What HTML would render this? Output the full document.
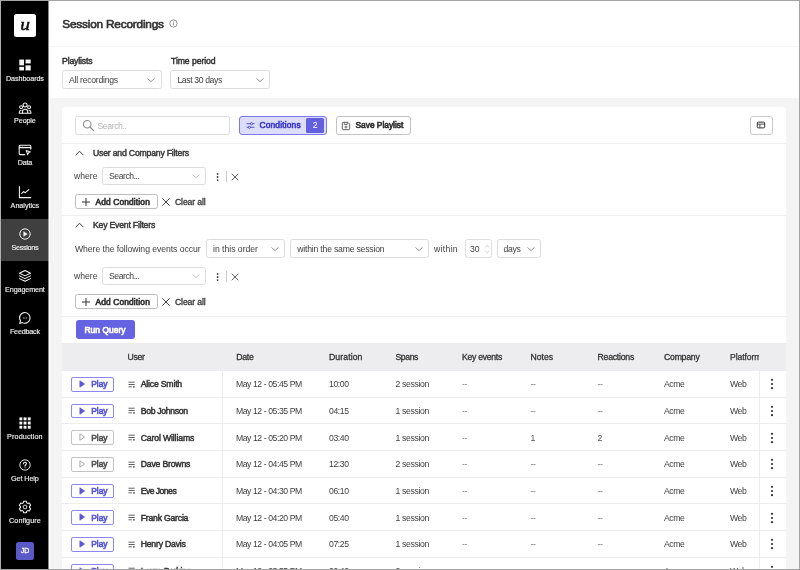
<!DOCTYPE html>
<html lang="en"><head><meta charset="utf-8"><title>Session Recordings</title>
<style>
html,body{margin:0;padding:0}
body{width:800px;height:570px;position:relative;overflow:hidden;background:#f4f4f5;font-family:"Liberation Sans", sans-serif}
body>div,body>svg{position:absolute;box-sizing:border-box}
body{will-change:transform}
.t{white-space:nowrap}
</style></head>
<body>
<div style="left:48px;top:1px;width:751px;height:97px;background:#fff"></div>
<div style="left:48px;top:45.5px;width:751px;height:1px;background:#f2f2f2"></div>
<div style="left:1px;top:1px;width:47px;height:568px;background:#000"></div>
<div style="left:48px;top:1px;width:1px;height:568px;background:#8a8a8a"></div>
<div style="left:1px;top:218.7px;width:47px;height:42px;background:#3f3f3f"></div>
<div style="left:48px;top:218.7px;width:1px;height:42px;background:#a0a0a0"></div>
<div style="left:14px;top:14px;width:22px;height:23px;background:#fff;border-radius:2.5px"></div>
<div class="t" style="top:17.50px;font-size:16.5px;font-weight:400;color:#111;line-height:14px;font-family:'Liberation Serif',serif;font-style:italic;transform:scaleX(1.18);-webkit-text-stroke:0.48px;left:-75.0px;width:200px;text-align:center;"><span>u</span></div>
<div class="t" style="top:72.15px;font-size:7.2px;font-weight:400;color:#f0f0f0;line-height:14px;-webkit-text-stroke:0.15px;left:-75.1px;width:200px;text-align:center;"><span style="letter-spacing:-0.08px">Dashboards</span></div>
<div class="t" style="top:114.32px;font-size:7.2px;font-weight:400;color:#f0f0f0;line-height:14px;-webkit-text-stroke:0.15px;left:-75.1px;width:200px;text-align:center;"><span style="letter-spacing:-0.13px">People</span></div>
<div class="t" style="top:156.49px;font-size:7.2px;font-weight:400;color:#f0f0f0;line-height:14px;-webkit-text-stroke:0.15px;left:-75.1px;width:200px;text-align:center;"><span style="letter-spacing:-0.20px">Data</span></div>
<div class="t" style="top:198.66px;font-size:7.2px;font-weight:400;color:#f0f0f0;line-height:14px;-webkit-text-stroke:0.15px;left:-75.1px;width:200px;text-align:center;"><span style="letter-spacing:-0.02px">Analytics</span></div>
<div class="t" style="top:240.83px;font-size:7.2px;font-weight:400;color:#f0f0f0;line-height:14px;-webkit-text-stroke:0.15px;left:-75.1px;width:200px;text-align:center;"><span style="letter-spacing:-0.30px">Sessions</span></div>
<div class="t" style="top:283.00px;font-size:7.2px;font-weight:400;color:#f0f0f0;line-height:14px;-webkit-text-stroke:0.15px;left:-75.1px;width:200px;text-align:center;"><span style="letter-spacing:-0.11px">Engagement</span></div>
<div class="t" style="top:325.17px;font-size:7.2px;font-weight:400;color:#f0f0f0;line-height:14px;-webkit-text-stroke:0.15px;left:-75.1px;width:200px;text-align:center;"><span style="letter-spacing:-0.20px">Feedback</span></div>
<div class="t" style="top:429.65px;font-size:7.2px;font-weight:400;color:#f0f0f0;line-height:14px;-webkit-text-stroke:0.15px;left:-75.1px;width:200px;text-align:center;"><span style="letter-spacing:0.13px">Production</span></div>
<div class="t" style="top:471.55px;font-size:7.2px;font-weight:400;color:#f0f0f0;line-height:14px;-webkit-text-stroke:0.15px;left:-75.1px;width:200px;text-align:center;"><span style="letter-spacing:-0.10px">Get Help</span></div>
<div class="t" style="top:513.55px;font-size:7.2px;font-weight:400;color:#f0f0f0;line-height:14px;-webkit-text-stroke:0.15px;left:-75.1px;width:200px;text-align:center;"><span style="letter-spacing:0.05px">Configure</span></div>
<svg style="left:17.9px;top:58.349999999999994px;" width="14" height="14" viewBox="0 0 14 14"><g fill="#f4f4f4"><rect x="1.3" y="1.55" width="4.7" height="5.8"/><rect x="7.5" y="1.55" width="5.2" height="3.9"/><rect x="1.3" y="8.85" width="4.7" height="3.6"/><rect x="7.5" y="7.35" width="5.2" height="5.1"/></g></svg>
<svg style="left:17.9px;top:100.52px;" width="14" height="14" viewBox="0 0 14 14"><g fill="none" stroke="#f4f4f4" stroke-width="1.05" stroke-linecap="round" stroke-linejoin="round"><circle cx="7.1" cy="4" r="2"/><circle cx="3.1" cy="6.2" r="1.45"/><circle cx="11.1" cy="6.2" r="1.45"/><path d="M4.5 12.3V10.6C4.5 9.2 5.6 8.3 7.1 8.3S9.7 9.2 9.7 10.6V12.3Z"/><path d="M4.5 12.3H1.3V11.2C1.3 10.1 2 9.5 3.1 9.5"/><path d="M9.7 12.3H12.9V11.2C12.9 10.1 12.2 9.5 11.1 9.5"/></g></svg>
<svg style="left:17.9px;top:142.69px;" width="14" height="14" viewBox="0 0 14 14"><g fill="none" stroke="#f4f4f4" stroke-width="1.05" stroke-linecap="round" stroke-linejoin="round"><path d="M6.8 11.6H2.2C1.6 11.6 1.2 11.2 1.2 10.6V3.2C1.2 2.6 1.6 2.2 2.2 2.2H11.8C12.4 2.2 12.8 2.6 12.8 3.2V6.2"/><path d="M1.2 4.6H12.8"/><path d="M8.2 7.4L12.4 8.9L10.5 9.8L9.7 11.7Z"/></g><circle cx="2.8" cy="3.4" r="0.4" fill="#f4f4f4"/><circle cx="4.2" cy="3.4" r="0.4" fill="#f4f4f4"/></svg>
<svg style="left:17.9px;top:184.86px;" width="14" height="14" viewBox="0 0 14 14"><g fill="none" stroke="#f4f4f4" stroke-width="1.05" stroke-linecap="round" stroke-linejoin="round"><path d="M1.4 1.4V12.6H12.8"/><path d="M3.8 8.4L5.6 6.6L7.3 7.7L10.8 4.6"/></g></svg>
<svg style="left:17.9px;top:227.03px;" width="14" height="14" viewBox="0 0 14 14"><circle cx="7" cy="7" r="5.2" fill="none" stroke="#f4f4f4" stroke-width="1"/><path d="M5.7 4.7L9.3 7L5.7 9.3Z" fill="#f4f4f4" stroke="#f4f4f4" stroke-width="0.5" stroke-linejoin="round"/></svg>
<svg style="left:17.9px;top:269.20000000000005px;" width="14" height="14" viewBox="0 0 14 14"><g fill="none" stroke="#f4f4f4" stroke-width="1.05" stroke-linecap="round" stroke-linejoin="round"><path d="M7 1.5L12.5 4.2L7 6.9L1.5 4.2Z"/><path d="M1.5 6.9L7 9.6L12.5 6.9"/><path d="M1.5 9.6L7 12.3L12.5 9.6"/></g></svg>
<svg style="left:17.9px;top:311.37px;" width="14" height="14" viewBox="0 0 14 14"><g fill="none" stroke="#f4f4f4" stroke-width="1.05" stroke-linecap="round" stroke-linejoin="round"><path d="M7 1.6A5.3 5.3 0 1 1 4.3 11.6L1.7 12.4L2.5 9.9A5.3 5.3 0 0 1 7 1.6Z"/></g><path d="M4.8 7H9.2" stroke="#f4f4f4" stroke-width="0.9" stroke-dasharray="0.9 0.75"/></svg>
<svg style="left:17.9px;top:415.6px;" width="14" height="14" viewBox="0 0 14 14"><g fill="#f4f4f4"><rect x="1.4" y="1.4" width="2.9" height="2.9"/><rect x="5.6" y="1.4" width="2.9" height="2.9"/><rect x="9.8" y="1.4" width="2.9" height="2.9"/><rect x="1.4" y="5.6" width="2.9" height="2.9"/><rect x="5.6" y="5.6" width="2.9" height="2.9"/><rect x="9.8" y="5.6" width="2.9" height="2.9"/><rect x="1.4" y="9.8" width="2.9" height="2.9"/><rect x="5.6" y="9.8" width="2.9" height="2.9"/><rect x="9.8" y="9.8" width="2.9" height="2.9"/></g></svg>
<svg style="left:17.9px;top:457.6px;" width="14" height="14" viewBox="0 0 14 14"><circle cx="7" cy="7" r="5.2" fill="none" stroke="#f4f4f4" stroke-width="0.9"/><path d="M5.5 5.7C5.5 4.8 6.1 4.2 7 4.2S8.5 4.8 8.5 5.6C8.5 6.7 7 6.8 7 8.1" fill="none" stroke="#f4f4f4" stroke-width="1.05" stroke-linecap="round" stroke-linejoin="round"/><circle cx="7" cy="9.8" r="0.55" fill="#f4f4f4"/></svg>
<svg style="left:17.9px;top:499.6px;" width="14" height="14" viewBox="0 0 14 14"><path d="M5.60 1.27L8.40 1.27L8.75 2.86L9.71 3.41L11.26 2.92L12.66 5.35L11.47 6.45L11.47 7.55L12.66 8.65L11.26 11.08L9.71 10.59L8.75 11.14L8.40 12.73L5.60 12.73L5.25 11.14L4.29 10.59L2.74 11.08L1.34 8.65L2.53 7.55L2.53 6.45L1.34 5.35L2.74 2.92L4.29 3.41L5.25 2.86Z" fill="none" stroke="#f4f4f4" stroke-width="1.05" stroke-linecap="round" stroke-linejoin="round"/><circle cx="7" cy="7" r="1.9" fill="none" stroke="#f4f4f4" stroke-width="0.9"/></svg>
<div style="left:16px;top:542.4px;width:18px;height:17.6px;background:#5b59c8;border-radius:2.5px"></div>
<div class="t" style="top:544.40px;font-size:7px;font-weight:400;color:#fff;line-height:14px;-webkit-text-stroke:0.3px;left:-75.1px;width:200px;text-align:center;"><span>JD</span></div>
<div class="t" style="top:16.80px;font-size:11.8px;font-weight:400;color:#333;line-height:14px;-webkit-text-stroke:0.65px;left:62.3px;"><span style="letter-spacing:-0.19px">Session Recordings</span></div>
<svg style="left:168.9px;top:19.25px;" width="9" height="9" viewBox="0 0 9 9"><circle cx="4.5" cy="4.5" r="3.6" fill="none" stroke="#858585" stroke-width="0.9"/><path d="M4.5 4.1v2.3" stroke="#777" stroke-width="0.85"/><circle cx="4.5" cy="2.9" r="0.5" fill="#777"/></svg>
<div class="t" style="top:54.20px;font-size:8.67px;font-weight:400;color:#333;line-height:14px;-webkit-text-stroke:0.48px;left:62px;"><span style="letter-spacing:-0.14px">Playlists</span></div>
<div class="t" style="top:54.20px;font-size:8.67px;font-weight:400;color:#333;line-height:14px;-webkit-text-stroke:0.48px;left:171px;"><span style="letter-spacing:-0.08px">Time period</span></div>
<div style="left:62px;top:70px;width:99.6px;height:19px;background:#fff;border:1px solid #dcdcdc;border-radius:2.5px"></div>
<div class="t" style="top:72.70px;font-size:8.67px;font-weight:400;color:#3d3d3d;line-height:14px;left:69px;"><span style="letter-spacing:-0.25px">All recordings</span></div>
<svg style="left:147.1px;top:76.5px;" width="8" height="6" viewBox="0 0 8 6"><path d="M0.8 1.8 L4 4.6 L7.2 1.8" fill="none" stroke="#777" stroke-width="0.8" stroke-linecap="round" stroke-linejoin="round"/></svg>
<div style="left:170.4px;top:70px;width:100px;height:19px;background:#fff;border:1px solid #dcdcdc;border-radius:2.5px"></div>
<div class="t" style="top:72.70px;font-size:8.67px;font-weight:400;color:#3d3d3d;line-height:14px;left:177.4px;"><span style="letter-spacing:-0.38px">Last 30 days</span></div>
<svg style="left:255.89999999999998px;top:76.5px;" width="8" height="6" viewBox="0 0 8 6"><path d="M0.8 1.8 L4 4.6 L7.2 1.8" fill="none" stroke="#777" stroke-width="0.8" stroke-linecap="round" stroke-linejoin="round"/></svg>
<div style="left:49px;top:98px;width:1px;height:471px;background:#fff"></div>
<div style="left:62px;top:107px;width:723.8px;height:470px;background:#fff;border-radius:3px 3px 0 0"></div>
<div style="left:75px;top:116px;width:155px;height:18.5px;background:#fff;border:1px solid #dcdcdc;border-radius:2.5px"></div>
<svg style="left:82px;top:119px;" width="13" height="13" viewBox="0 0 13 13"><circle cx="5.2" cy="5.2" r="3.8" fill="none" stroke="#8a8a8a" stroke-width="1.05"/><path d="M8 8 L11.6 11.6" stroke="#8a8a8a" stroke-width="1.2" stroke-linecap="round"/></svg>
<div class="t" style="top:118.50px;font-size:8.67px;font-weight:400;color:#b5b5b5;line-height:14px;left:97.5px;"><span style="letter-spacing:-0.41px">Search..</span></div>
<div style="left:239px;top:116px;width:87.5px;height:18.5px;background:#dcdcfb;border:1px solid #7b79ea;border-radius:3px"></div>
<svg style="left:246px;top:120.8px;" width="9" height="9" viewBox="0 0 9 9"><path d="M1 2.7H8M1 6.3H8" stroke="#3d3bc4" stroke-width="0.85" stroke-linecap="round"/><circle cx="5.6" cy="2.7" r="1.1" fill="#dcdcfb" stroke="#3d3bc4" stroke-width="0.75"/><circle cx="3.4" cy="6.3" r="1.1" fill="#dcdcfb" stroke="#3d3bc4" stroke-width="0.75"/></svg>
<div class="t" style="top:118.30px;font-size:8.4px;font-weight:400;color:#403ec8;line-height:14px;-webkit-text-stroke:0.65px;left:259.5px;"><span style="letter-spacing:0.17px">Conditions</span></div>
<div style="left:306px;top:118px;width:18.3px;height:14.5px;background:#6360df;border-radius:1.5px"></div>
<div class="t" style="top:118.30px;font-size:8.67px;font-weight:400;color:#fff;line-height:14px;left:215.2px;width:200px;text-align:center;"><span>2</span></div>
<div style="left:335.5px;top:116px;width:75px;height:18.5px;background:#fff;border:1px solid #c2c2c2;border-radius:3px"></div>
<svg style="left:341px;top:120.5px;" width="10" height="10" viewBox="0 0 10 10"><path d="M1.3 2.2C1.3 1.7 1.7 1.3 2.2 1.3H6.9L8.7 3.1V7.8C8.7 8.3 8.3 8.7 7.8 8.7H2.2C1.7 8.7 1.3 8.3 1.3 7.8Z" fill="none" stroke="#444" stroke-width="0.85" stroke-linejoin="round"/><path d="M3.2 1.5V3.4H6.3V1.5" fill="none" stroke="#444" stroke-width="0.75"/><circle cx="5" cy="6" r="1.05" fill="none" stroke="#444" stroke-width="0.75"/></svg>
<div class="t" style="top:118.30px;font-size:8.4px;font-weight:400;color:#333;line-height:14px;-webkit-text-stroke:0.65px;left:355.5px;"><span style="letter-spacing:-0.01px">Save Playlist</span></div>
<div style="left:750px;top:116px;width:22.5px;height:18.5px;background:#fff;border:1px solid #c9c9c9;border-radius:3px"></div>
<svg style="left:756.1px;top:121.4px;" width="10" height="8" viewBox="0 0 10 8"><rect x="1.3" y="1.1" width="7.4" height="5.8" rx="1" fill="none" stroke="#333" stroke-width="1"/><path d="M1.3 3.1H8.7M3.9 3.1V6.9" stroke="#333" stroke-width="0.85"/></svg>
<div style="left:62px;top:143px;width:723.8px;height:1px;background:#f0f0f0"></div>
<svg style="left:74.8px;top:149.7px;" width="9" height="6" viewBox="0 0 9 6"><path d="M0.9 4.9 L4.5 1.3 L8.1 4.9" fill="none" stroke="#3c3c3c" stroke-width="1" stroke-linecap="round" stroke-linejoin="round"/></svg>
<div class="t" style="top:146.00px;font-size:8.67px;font-weight:400;color:#3a3a3a;line-height:14px;-webkit-text-stroke:0.48px;left:93px;"><span style="letter-spacing:-0.19px">User and Company Filters</span></div>
<div class="t" style="top:169.30px;font-size:8.67px;font-weight:400;color:#3d3d3d;line-height:14px;left:74px;"><span style="letter-spacing:-0.02px">where</span></div>
<div style="left:102px;top:166.5px;width:104px;height:18.5px;background:#fff;border:1px solid #dcdcdc;border-radius:2.5px"></div>
<div class="t" style="top:168.95px;font-size:8.67px;font-weight:400;color:#3d3d3d;line-height:14px;left:109px;"><span style="letter-spacing:-0.46px">Search...</span></div>
<svg style="left:191.5px;top:172.75px;" width="8" height="6" viewBox="0 0 8 6"><path d="M0.8 1.8 L4 4.6 L7.2 1.8" fill="none" stroke="#b0b0b0" stroke-width="0.8" stroke-linecap="round" stroke-linejoin="round"/></svg>
<svg style="left:215px;top:171.8px;" width="5" height="10" viewBox="0 0 5 10"><circle cx="2.6" cy="1.9" r="0.9" fill="#333"/><circle cx="2.6" cy="5" r="0.9" fill="#333"/><circle cx="2.6" cy="8.1" r="0.9" fill="#333"/></svg>
<div style="left:225.8px;top:171.3px;width:0.8px;height:11px;background:#c9c9c9"></div>
<svg style="left:231px;top:172.8px;" width="8" height="8" viewBox="0 0 8 8"><path d="M1 1L7 7M7 1L1 7" stroke="#444" stroke-width="0.85" stroke-linecap="round"/></svg>
<div style="left:75px;top:194.0px;width:82.5px;height:15px;background:#fff;border:1px solid #bdbdbd;border-radius:2.5px"></div>
<svg style="left:82.2px;top:197.8px;" width="8" height="8" viewBox="0 0 8 8"><path d="M4 0.4V7.6M0.4 4H7.6" stroke="#333" stroke-width="1" stroke-linecap="round"/></svg>
<div class="t" style="top:194.80px;font-size:8.4px;font-weight:400;color:#333;line-height:14px;-webkit-text-stroke:0.65px;left:95.5px;"><span style="letter-spacing:0.14px">Add Condition</span></div>
<svg style="left:162.3px;top:197.9px;" width="8" height="8" viewBox="0 0 8 8"><path d="M0.7 0.7L7.3 7.3M7.3 0.7L0.7 7.3" stroke="#3a3a3a" stroke-width="0.95" stroke-linecap="round"/></svg>
<div class="t" style="top:194.80px;font-size:8.67px;font-weight:400;color:#333;line-height:14px;-webkit-text-stroke:0.3px;left:175px;"><span style="letter-spacing:-0.14px">Clear all</span></div>
<div style="left:62px;top:215px;width:723.8px;height:1px;background:#f0f0f0"></div>
<svg style="left:74.8px;top:221.7px;" width="9" height="6" viewBox="0 0 9 6"><path d="M0.9 4.9 L4.5 1.3 L8.1 4.9" fill="none" stroke="#3c3c3c" stroke-width="1" stroke-linecap="round" stroke-linejoin="round"/></svg>
<div class="t" style="top:218.00px;font-size:8.67px;font-weight:400;color:#3a3a3a;line-height:14px;-webkit-text-stroke:0.48px;left:93px;"><span style="letter-spacing:-0.20px">Key Event Filters</span></div>
<div class="t" style="top:241.50px;font-size:8.67px;font-weight:400;color:#3d3d3d;line-height:14px;left:75px;"><span style="letter-spacing:-0.06px">Where the following events occur</span></div>
<div style="left:206px;top:239px;width:79.3px;height:19px;background:#fff;border:1px solid #dcdcdc;border-radius:2.5px"></div>
<div class="t" style="top:241.70px;font-size:8.67px;font-weight:400;color:#3d3d3d;line-height:14px;left:213px;"><span style="letter-spacing:-0.02px">in this order</span></div>
<svg style="left:270.8px;top:245.5px;" width="8" height="6" viewBox="0 0 8 6"><path d="M0.8 1.8 L4 4.6 L7.2 1.8" fill="none" stroke="#777" stroke-width="0.8" stroke-linecap="round" stroke-linejoin="round"/></svg>
<div style="left:290.3px;top:239px;width:139px;height:19px;background:#fff;border:1px solid #dcdcdc;border-radius:2.5px"></div>
<div class="t" style="top:241.70px;font-size:8.67px;font-weight:400;color:#3d3d3d;line-height:14px;left:297.3px;"><span style="letter-spacing:-0.21px">within the same session</span></div>
<svg style="left:414.8px;top:245.5px;" width="8" height="6" viewBox="0 0 8 6"><path d="M0.8 1.8 L4 4.6 L7.2 1.8" fill="none" stroke="#777" stroke-width="0.8" stroke-linecap="round" stroke-linejoin="round"/></svg>
<div class="t" style="top:241.50px;font-size:8.67px;font-weight:400;color:#3d3d3d;line-height:14px;left:434px;"><span style="letter-spacing:0.31px">within</span></div>
<div style="left:465px;top:239px;width:27.4px;height:18.7px;background:#fff;border:1px solid #dedede;border-radius:2.5px"></div>
<div class="t" style="top:241.50px;font-size:8.67px;font-weight:400;color:#3d3d3d;line-height:14px;left:470px;"><span>30</span></div>
<svg style="left:483.5px;top:242.5px;" width="6" height="12" viewBox="0 0 6 12"><path d="M1.2 4 L3 2.2 L4.8 4M1.2 8 L3 9.8 L4.8 8" fill="none" stroke="#b5b5b5" stroke-width="0.6" stroke-linecap="round" stroke-linejoin="round"/></svg>
<div style="left:497px;top:239px;width:44.2px;height:19px;background:#fff;border:1px solid #dcdcdc;border-radius:2.5px"></div>
<div class="t" style="top:241.70px;font-size:8.67px;font-weight:400;color:#3d3d3d;line-height:14px;left:503.5px;"><span style="letter-spacing:-0.32px">days</span></div>
<svg style="left:526.7px;top:245.5px;" width="8" height="6" viewBox="0 0 8 6"><path d="M0.8 1.8 L4 4.6 L7.2 1.8" fill="none" stroke="#777" stroke-width="0.8" stroke-linecap="round" stroke-linejoin="round"/></svg>
<div class="t" style="top:269.30px;font-size:8.67px;font-weight:400;color:#3d3d3d;line-height:14px;left:74px;"><span style="letter-spacing:-0.02px">where</span></div>
<div style="left:102px;top:266.5px;width:104px;height:18.5px;background:#fff;border:1px solid #dcdcdc;border-radius:2.5px"></div>
<div class="t" style="top:268.95px;font-size:8.67px;font-weight:400;color:#3d3d3d;line-height:14px;left:109px;"><span style="letter-spacing:-0.46px">Search...</span></div>
<svg style="left:191.5px;top:272.75px;" width="8" height="6" viewBox="0 0 8 6"><path d="M0.8 1.8 L4 4.6 L7.2 1.8" fill="none" stroke="#b0b0b0" stroke-width="0.8" stroke-linecap="round" stroke-linejoin="round"/></svg>
<svg style="left:215px;top:271.8px;" width="5" height="10" viewBox="0 0 5 10"><circle cx="2.6" cy="1.9" r="0.9" fill="#333"/><circle cx="2.6" cy="5" r="0.9" fill="#333"/><circle cx="2.6" cy="8.1" r="0.9" fill="#333"/></svg>
<div style="left:225.8px;top:271.3px;width:0.8px;height:11px;background:#c9c9c9"></div>
<svg style="left:231px;top:272.8px;" width="8" height="8" viewBox="0 0 8 8"><path d="M1 1L7 7M7 1L1 7" stroke="#444" stroke-width="0.85" stroke-linecap="round"/></svg>
<div style="left:75px;top:293.8px;width:82.5px;height:15px;background:#fff;border:1px solid #bdbdbd;border-radius:2.5px"></div>
<svg style="left:82.2px;top:297.6px;" width="8" height="8" viewBox="0 0 8 8"><path d="M4 0.4V7.6M0.4 4H7.6" stroke="#333" stroke-width="1" stroke-linecap="round"/></svg>
<div class="t" style="top:294.60px;font-size:8.4px;font-weight:400;color:#333;line-height:14px;-webkit-text-stroke:0.65px;left:95.5px;"><span style="letter-spacing:0.14px">Add Condition</span></div>
<svg style="left:162.3px;top:297.7px;" width="8" height="8" viewBox="0 0 8 8"><path d="M0.7 0.7L7.3 7.3M7.3 0.7L0.7 7.3" stroke="#3a3a3a" stroke-width="0.95" stroke-linecap="round"/></svg>
<div class="t" style="top:294.60px;font-size:8.67px;font-weight:400;color:#333;line-height:14px;-webkit-text-stroke:0.3px;left:175px;"><span style="letter-spacing:-0.14px">Clear all</span></div>
<div style="left:62px;top:315.6px;width:723.8px;height:1px;background:#f0f0f0"></div>
<div style="left:75.5px;top:320px;width:59px;height:18.7px;background:#6663e2;border-radius:3px"></div>
<div class="t" style="top:322.50px;font-size:8.4px;font-weight:400;color:#fff;line-height:14px;-webkit-text-stroke:0.65px;left:5px;width:200px;text-align:center;"><span style="letter-spacing:0.06px">Run Query</span></div>
<div style="left:62px;top:343px;width:723.8px;height:27.5px;background:#ededef"></div>
<div class="t" style="top:350.20px;font-size:8.67px;font-weight:400;color:#333;line-height:14px;-webkit-text-stroke:0.3px;left:127.5px;"><span style="letter-spacing:-0.32px">User</span></div>
<div class="t" style="top:350.20px;font-size:8.67px;font-weight:400;color:#333;line-height:14px;-webkit-text-stroke:0.3px;left:236.2px;"><span style="letter-spacing:-0.20px">Date</span></div>
<div class="t" style="top:350.20px;font-size:8.67px;font-weight:400;color:#333;line-height:14px;-webkit-text-stroke:0.3px;left:329px;"><span style="letter-spacing:0.10px">Duration</span></div>
<div class="t" style="top:350.20px;font-size:8.67px;font-weight:400;color:#333;line-height:14px;-webkit-text-stroke:0.3px;left:395.5px;"><span style="letter-spacing:-0.41px">Spans</span></div>
<div class="t" style="top:350.20px;font-size:8.67px;font-weight:400;color:#333;line-height:14px;-webkit-text-stroke:0.3px;left:462px;"><span style="letter-spacing:-0.28px">Key events</span></div>
<div class="t" style="top:350.20px;font-size:8.67px;font-weight:400;color:#333;line-height:14px;-webkit-text-stroke:0.3px;left:530.5px;"><span style="letter-spacing:-0.03px">Notes</span></div>
<div class="t" style="top:350.20px;font-size:8.67px;font-weight:400;color:#333;line-height:14px;-webkit-text-stroke:0.3px;left:597.5px;"><span style="letter-spacing:-0.22px">Reactions</span></div>
<div class="t" style="top:350.20px;font-size:8.67px;font-weight:400;color:#333;line-height:14px;-webkit-text-stroke:0.3px;left:664px;"><span style="letter-spacing:-0.22px">Company</span></div>
<div style="left:730px;top:350.2px;width:29.3px;height:14px;overflow:hidden;white-space:nowrap;font-size:8.67px;-webkit-text-stroke:0.25px;color:#333;line-height:14px;letter-spacing:-0.1px">Platform</div>
<div style="left:62px;top:397px;width:723.8px;height:1px;background:#ededed"></div>
<div style="left:70.8px;top:377.0px;width:43.5px;height:14.8px;background:#fff;border:1px solid #8b89ec;border-radius:2px"></div>
<svg style="left:78px;top:380.1px;" width="8" height="8" viewBox="0 0 8 8"><path d="M1.9 0.8L6.6 4L1.9 7.2Z" fill="#5957d8" stroke="#5957d8" stroke-width="0.7" stroke-linejoin="round"/></svg>
<div class="t" style="top:377.30px;font-size:8.4px;font-weight:400;color:#5957d8;line-height:14px;-webkit-text-stroke:0.65px;left:91.2px;"><span>Play</span></div>
<svg style="left:128.3px;top:380.5px;" width="8" height="8" viewBox="0 0 8 8"><path d="M0.5 1.2H6.7M0.5 3.5H6.7M0.5 5.8H3.8" stroke="#444" stroke-width="0.85"/><path d="M4.9 5.8H6.9M5.9 4.9V6.9" stroke="#444" stroke-width="0.7"/></svg>
<div class="t" style="top:377.30px;font-size:8.67px;font-weight:400;color:#333;line-height:14px;-webkit-text-stroke:0.48px;left:140.7px;"><span style="letter-spacing:-0.18px">Alice Smith</span></div>
<div class="t" style="top:377.30px;font-size:8.67px;font-weight:400;color:#3d3d3d;line-height:14px;left:235.9px;"><span style="letter-spacing:-0.42px">May 12 - 05:45 PM</span></div>
<div class="t" style="top:377.30px;font-size:8.67px;font-weight:400;color:#3d3d3d;line-height:14px;left:329px;"><span style="letter-spacing:-0.43px">10:00</span></div>
<div class="t" style="top:377.30px;font-size:8.67px;font-weight:400;color:#3d3d3d;line-height:14px;left:395.5px;"><span style="letter-spacing:-0.34px">2 session</span></div>
<div class="t" style="top:377.30px;font-size:8.67px;font-weight:400;color:#777;line-height:14px;left:462px;"><span style="letter-spacing:-0.38px">--</span></div>
<div class="t" style="top:377.30px;font-size:8.67px;font-weight:400;color:#777;line-height:14px;left:530.5px;"><span style="letter-spacing:-0.38px">--</span></div>
<div class="t" style="top:377.30px;font-size:8.67px;font-weight:400;color:#777;line-height:14px;left:597.5px;"><span style="letter-spacing:-0.38px">--</span></div>
<div class="t" style="top:377.30px;font-size:8.67px;font-weight:400;color:#3d3d3d;line-height:14px;left:664px;"><span style="letter-spacing:-0.41px">Acme</span></div>
<div class="t" style="top:377.30px;font-size:8.67px;font-weight:400;color:#3d3d3d;line-height:14px;left:730px;"><span style="letter-spacing:-0.39px">Web</span></div>
<svg style="left:769px;top:378.3px;" width="6" height="12" viewBox="0 0 6 12"><circle cx="3" cy="1.8" r="1.12" fill="#333"/><circle cx="3" cy="6" r="1.12" fill="#333"/><circle cx="3" cy="10.2" r="1.12" fill="#333"/></svg>
<div style="left:62px;top:423px;width:723.8px;height:1px;background:#ededed"></div>
<div style="left:70.8px;top:403.67px;width:43.5px;height:14.8px;background:#fff;border:1px solid #8b89ec;border-radius:2px"></div>
<svg style="left:78px;top:406.77000000000004px;" width="8" height="8" viewBox="0 0 8 8"><path d="M1.9 0.8L6.6 4L1.9 7.2Z" fill="#5957d8" stroke="#5957d8" stroke-width="0.7" stroke-linejoin="round"/></svg>
<div class="t" style="top:403.97px;font-size:8.4px;font-weight:400;color:#5957d8;line-height:14px;-webkit-text-stroke:0.65px;left:91.2px;"><span>Play</span></div>
<svg style="left:128.3px;top:407.17px;" width="8" height="8" viewBox="0 0 8 8"><path d="M0.5 1.2H6.7M0.5 3.5H6.7M0.5 5.8H3.8" stroke="#444" stroke-width="0.85"/><path d="M4.9 5.8H6.9M5.9 4.9V6.9" stroke="#444" stroke-width="0.7"/></svg>
<div class="t" style="top:403.97px;font-size:8.67px;font-weight:400;color:#333;line-height:14px;-webkit-text-stroke:0.48px;left:140.7px;"><span style="letter-spacing:-0.32px">Bob Johnson</span></div>
<div class="t" style="top:403.97px;font-size:8.67px;font-weight:400;color:#3d3d3d;line-height:14px;left:235.9px;"><span style="letter-spacing:-0.42px">May 12 - 05:35 PM</span></div>
<div class="t" style="top:403.97px;font-size:8.67px;font-weight:400;color:#3d3d3d;line-height:14px;left:329px;"><span style="letter-spacing:-0.43px">04:15</span></div>
<div class="t" style="top:403.97px;font-size:8.67px;font-weight:400;color:#3d3d3d;line-height:14px;left:395.5px;"><span style="letter-spacing:-0.34px">1 session</span></div>
<div class="t" style="top:403.97px;font-size:8.67px;font-weight:400;color:#777;line-height:14px;left:462px;"><span style="letter-spacing:-0.38px">--</span></div>
<div class="t" style="top:403.97px;font-size:8.67px;font-weight:400;color:#777;line-height:14px;left:530.5px;"><span style="letter-spacing:-0.38px">--</span></div>
<div class="t" style="top:403.97px;font-size:8.67px;font-weight:400;color:#777;line-height:14px;left:597.5px;"><span style="letter-spacing:-0.38px">--</span></div>
<div class="t" style="top:403.97px;font-size:8.67px;font-weight:400;color:#3d3d3d;line-height:14px;left:664px;"><span style="letter-spacing:-0.41px">Acme</span></div>
<div class="t" style="top:403.97px;font-size:8.67px;font-weight:400;color:#3d3d3d;line-height:14px;left:730px;"><span style="letter-spacing:-0.39px">Web</span></div>
<svg style="left:769px;top:404.97px;" width="6" height="12" viewBox="0 0 6 12"><circle cx="3" cy="1.8" r="1.12" fill="#333"/><circle cx="3" cy="6" r="1.12" fill="#333"/><circle cx="3" cy="10.2" r="1.12" fill="#333"/></svg>
<div style="left:62px;top:450px;width:723.8px;height:1px;background:#ededed"></div>
<div style="left:70.8px;top:430.34000000000003px;width:43.5px;height:14.8px;background:#fff;border:1px solid #c2c2c2;border-radius:2px"></div>
<svg style="left:78px;top:433.44000000000005px;" width="8" height="8" viewBox="0 0 8 8"><path d="M1.9 0.8L6.6 4L1.9 7.2Z" fill="none" stroke="#888" stroke-width="0.7" stroke-linejoin="round"/></svg>
<div class="t" style="top:430.64px;font-size:8.4px;font-weight:400;color:#555;line-height:14px;-webkit-text-stroke:0.65px;left:91.2px;"><span>Play</span></div>
<svg style="left:128.3px;top:433.84000000000003px;" width="8" height="8" viewBox="0 0 8 8"><path d="M0.5 1.2H6.7M0.5 3.5H6.7M0.5 5.8H3.8" stroke="#444" stroke-width="0.85"/><path d="M4.9 5.8H6.9M5.9 4.9V6.9" stroke="#444" stroke-width="0.7"/></svg>
<div class="t" style="top:430.64px;font-size:8.67px;font-weight:400;color:#333;line-height:14px;-webkit-text-stroke:0.48px;left:140.7px;"><span style="letter-spacing:-0.13px">Carol Williams</span></div>
<div class="t" style="top:430.64px;font-size:8.67px;font-weight:400;color:#3d3d3d;line-height:14px;left:235.9px;"><span style="letter-spacing:-0.42px">May 12 - 05:20 PM</span></div>
<div class="t" style="top:430.64px;font-size:8.67px;font-weight:400;color:#3d3d3d;line-height:14px;left:329px;"><span style="letter-spacing:-0.43px">03:40</span></div>
<div class="t" style="top:430.64px;font-size:8.67px;font-weight:400;color:#3d3d3d;line-height:14px;left:395.5px;"><span style="letter-spacing:-0.34px">1 session</span></div>
<div class="t" style="top:430.64px;font-size:8.67px;font-weight:400;color:#777;line-height:14px;left:462px;"><span style="letter-spacing:-0.38px">--</span></div>
<div class="t" style="top:430.64px;font-size:8.67px;font-weight:400;color:#555;line-height:14px;left:530.5px;"><span>1</span></div>
<div class="t" style="top:430.64px;font-size:8.67px;font-weight:400;color:#555;line-height:14px;left:597.5px;"><span>2</span></div>
<div class="t" style="top:430.64px;font-size:8.67px;font-weight:400;color:#3d3d3d;line-height:14px;left:664px;"><span style="letter-spacing:-0.41px">Acme</span></div>
<div class="t" style="top:430.64px;font-size:8.67px;font-weight:400;color:#3d3d3d;line-height:14px;left:730px;"><span style="letter-spacing:-0.39px">Web</span></div>
<svg style="left:769px;top:431.64000000000004px;" width="6" height="12" viewBox="0 0 6 12"><circle cx="3" cy="1.8" r="1.12" fill="#333"/><circle cx="3" cy="6" r="1.12" fill="#333"/><circle cx="3" cy="10.2" r="1.12" fill="#333"/></svg>
<div style="left:62px;top:477px;width:723.8px;height:1px;background:#ededed"></div>
<div style="left:70.8px;top:457.01px;width:43.5px;height:14.8px;background:#fff;border:1px solid #c2c2c2;border-radius:2px"></div>
<svg style="left:78px;top:460.11px;" width="8" height="8" viewBox="0 0 8 8"><path d="M1.9 0.8L6.6 4L1.9 7.2Z" fill="none" stroke="#888" stroke-width="0.7" stroke-linejoin="round"/></svg>
<div class="t" style="top:457.31px;font-size:8.4px;font-weight:400;color:#555;line-height:14px;-webkit-text-stroke:0.65px;left:91.2px;"><span>Play</span></div>
<svg style="left:128.3px;top:460.51px;" width="8" height="8" viewBox="0 0 8 8"><path d="M0.5 1.2H6.7M0.5 3.5H6.7M0.5 5.8H3.8" stroke="#444" stroke-width="0.85"/><path d="M4.9 5.8H6.9M5.9 4.9V6.9" stroke="#444" stroke-width="0.7"/></svg>
<div class="t" style="top:457.31px;font-size:8.67px;font-weight:400;color:#333;line-height:14px;-webkit-text-stroke:0.48px;left:140.7px;"><span style="letter-spacing:-0.18px">Dave Browns</span></div>
<div class="t" style="top:457.31px;font-size:8.67px;font-weight:400;color:#3d3d3d;line-height:14px;left:235.9px;"><span style="letter-spacing:-0.42px">May 12 - 04:45 PM</span></div>
<div class="t" style="top:457.31px;font-size:8.67px;font-weight:400;color:#3d3d3d;line-height:14px;left:329px;"><span style="letter-spacing:-0.43px">12:30</span></div>
<div class="t" style="top:457.31px;font-size:8.67px;font-weight:400;color:#3d3d3d;line-height:14px;left:395.5px;"><span style="letter-spacing:-0.34px">2 session</span></div>
<div class="t" style="top:457.31px;font-size:8.67px;font-weight:400;color:#777;line-height:14px;left:462px;"><span style="letter-spacing:-0.38px">--</span></div>
<div class="t" style="top:457.31px;font-size:8.67px;font-weight:400;color:#777;line-height:14px;left:530.5px;"><span style="letter-spacing:-0.38px">--</span></div>
<div class="t" style="top:457.31px;font-size:8.67px;font-weight:400;color:#777;line-height:14px;left:597.5px;"><span style="letter-spacing:-0.38px">--</span></div>
<div class="t" style="top:457.31px;font-size:8.67px;font-weight:400;color:#3d3d3d;line-height:14px;left:664px;"><span style="letter-spacing:-0.41px">Acme</span></div>
<div class="t" style="top:457.31px;font-size:8.67px;font-weight:400;color:#3d3d3d;line-height:14px;left:730px;"><span style="letter-spacing:-0.39px">Web</span></div>
<svg style="left:769px;top:458.31px;" width="6" height="12" viewBox="0 0 6 12"><circle cx="3" cy="1.8" r="1.12" fill="#333"/><circle cx="3" cy="6" r="1.12" fill="#333"/><circle cx="3" cy="10.2" r="1.12" fill="#333"/></svg>
<div style="left:62px;top:503px;width:723.8px;height:1px;background:#ededed"></div>
<div style="left:70.8px;top:483.68px;width:43.5px;height:14.8px;background:#fff;border:1px solid #8b89ec;border-radius:2px"></div>
<svg style="left:78px;top:486.78000000000003px;" width="8" height="8" viewBox="0 0 8 8"><path d="M1.9 0.8L6.6 4L1.9 7.2Z" fill="#5957d8" stroke="#5957d8" stroke-width="0.7" stroke-linejoin="round"/></svg>
<div class="t" style="top:483.98px;font-size:8.4px;font-weight:400;color:#5957d8;line-height:14px;-webkit-text-stroke:0.65px;left:91.2px;"><span>Play</span></div>
<svg style="left:128.3px;top:487.18px;" width="8" height="8" viewBox="0 0 8 8"><path d="M0.5 1.2H6.7M0.5 3.5H6.7M0.5 5.8H3.8" stroke="#444" stroke-width="0.85"/><path d="M4.9 5.8H6.9M5.9 4.9V6.9" stroke="#444" stroke-width="0.7"/></svg>
<div class="t" style="top:483.98px;font-size:8.67px;font-weight:400;color:#333;line-height:14px;-webkit-text-stroke:0.48px;left:140.7px;"><span style="letter-spacing:-0.55px">Eve Jones</span></div>
<div class="t" style="top:483.98px;font-size:8.67px;font-weight:400;color:#3d3d3d;line-height:14px;left:235.9px;"><span style="letter-spacing:-0.42px">May 12 - 04:30 PM</span></div>
<div class="t" style="top:483.98px;font-size:8.67px;font-weight:400;color:#3d3d3d;line-height:14px;left:329px;"><span style="letter-spacing:-0.43px">06:10</span></div>
<div class="t" style="top:483.98px;font-size:8.67px;font-weight:400;color:#3d3d3d;line-height:14px;left:395.5px;"><span style="letter-spacing:-0.34px">1 session</span></div>
<div class="t" style="top:483.98px;font-size:8.67px;font-weight:400;color:#777;line-height:14px;left:462px;"><span style="letter-spacing:-0.38px">--</span></div>
<div class="t" style="top:483.98px;font-size:8.67px;font-weight:400;color:#777;line-height:14px;left:530.5px;"><span style="letter-spacing:-0.38px">--</span></div>
<div class="t" style="top:483.98px;font-size:8.67px;font-weight:400;color:#777;line-height:14px;left:597.5px;"><span style="letter-spacing:-0.38px">--</span></div>
<div class="t" style="top:483.98px;font-size:8.67px;font-weight:400;color:#3d3d3d;line-height:14px;left:664px;"><span style="letter-spacing:-0.41px">Acme</span></div>
<div class="t" style="top:483.98px;font-size:8.67px;font-weight:400;color:#3d3d3d;line-height:14px;left:730px;"><span style="letter-spacing:-0.39px">Web</span></div>
<svg style="left:769px;top:484.98px;" width="6" height="12" viewBox="0 0 6 12"><circle cx="3" cy="1.8" r="1.12" fill="#333"/><circle cx="3" cy="6" r="1.12" fill="#333"/><circle cx="3" cy="10.2" r="1.12" fill="#333"/></svg>
<div style="left:62px;top:530px;width:723.8px;height:1px;background:#ededed"></div>
<div style="left:70.8px;top:510.35px;width:43.5px;height:14.8px;background:#fff;border:1px solid #8b89ec;border-radius:2px"></div>
<svg style="left:78px;top:513.45px;" width="8" height="8" viewBox="0 0 8 8"><path d="M1.9 0.8L6.6 4L1.9 7.2Z" fill="#5957d8" stroke="#5957d8" stroke-width="0.7" stroke-linejoin="round"/></svg>
<div class="t" style="top:510.65px;font-size:8.4px;font-weight:400;color:#5957d8;line-height:14px;-webkit-text-stroke:0.65px;left:91.2px;"><span>Play</span></div>
<svg style="left:128.3px;top:513.85px;" width="8" height="8" viewBox="0 0 8 8"><path d="M0.5 1.2H6.7M0.5 3.5H6.7M0.5 5.8H3.8" stroke="#444" stroke-width="0.85"/><path d="M4.9 5.8H6.9M5.9 4.9V6.9" stroke="#444" stroke-width="0.7"/></svg>
<div class="t" style="top:510.65px;font-size:8.67px;font-weight:400;color:#333;line-height:14px;-webkit-text-stroke:0.48px;left:140.7px;"><span style="letter-spacing:-0.21px">Frank Garcia</span></div>
<div class="t" style="top:510.65px;font-size:8.67px;font-weight:400;color:#3d3d3d;line-height:14px;left:235.9px;"><span style="letter-spacing:-0.42px">May 12 - 04:20 PM</span></div>
<div class="t" style="top:510.65px;font-size:8.67px;font-weight:400;color:#3d3d3d;line-height:14px;left:329px;"><span style="letter-spacing:-0.43px">05:40</span></div>
<div class="t" style="top:510.65px;font-size:8.67px;font-weight:400;color:#3d3d3d;line-height:14px;left:395.5px;"><span style="letter-spacing:-0.34px">1 session</span></div>
<div class="t" style="top:510.65px;font-size:8.67px;font-weight:400;color:#777;line-height:14px;left:462px;"><span style="letter-spacing:-0.38px">--</span></div>
<div class="t" style="top:510.65px;font-size:8.67px;font-weight:400;color:#777;line-height:14px;left:530.5px;"><span style="letter-spacing:-0.38px">--</span></div>
<div class="t" style="top:510.65px;font-size:8.67px;font-weight:400;color:#777;line-height:14px;left:597.5px;"><span style="letter-spacing:-0.38px">--</span></div>
<div class="t" style="top:510.65px;font-size:8.67px;font-weight:400;color:#3d3d3d;line-height:14px;left:664px;"><span style="letter-spacing:-0.41px">Acme</span></div>
<div class="t" style="top:510.65px;font-size:8.67px;font-weight:400;color:#3d3d3d;line-height:14px;left:730px;"><span style="letter-spacing:-0.39px">Web</span></div>
<svg style="left:769px;top:511.65000000000003px;" width="6" height="12" viewBox="0 0 6 12"><circle cx="3" cy="1.8" r="1.12" fill="#333"/><circle cx="3" cy="6" r="1.12" fill="#333"/><circle cx="3" cy="10.2" r="1.12" fill="#333"/></svg>
<div style="left:62px;top:557px;width:723.8px;height:1px;background:#ededed"></div>
<div style="left:70.8px;top:537.02px;width:43.5px;height:14.8px;background:#fff;border:1px solid #8b89ec;border-radius:2px"></div>
<svg style="left:78px;top:540.12px;" width="8" height="8" viewBox="0 0 8 8"><path d="M1.9 0.8L6.6 4L1.9 7.2Z" fill="#5957d8" stroke="#5957d8" stroke-width="0.7" stroke-linejoin="round"/></svg>
<div class="t" style="top:537.32px;font-size:8.4px;font-weight:400;color:#5957d8;line-height:14px;-webkit-text-stroke:0.65px;left:91.2px;"><span>Play</span></div>
<svg style="left:128.3px;top:540.52px;" width="8" height="8" viewBox="0 0 8 8"><path d="M0.5 1.2H6.7M0.5 3.5H6.7M0.5 5.8H3.8" stroke="#444" stroke-width="0.85"/><path d="M4.9 5.8H6.9M5.9 4.9V6.9" stroke="#444" stroke-width="0.7"/></svg>
<div class="t" style="top:537.32px;font-size:8.67px;font-weight:400;color:#333;line-height:14px;-webkit-text-stroke:0.48px;left:140.7px;"><span style="letter-spacing:-0.19px">Henry Davis</span></div>
<div class="t" style="top:537.32px;font-size:8.67px;font-weight:400;color:#3d3d3d;line-height:14px;left:235.9px;"><span style="letter-spacing:-0.42px">May 12 - 04:05 PM</span></div>
<div class="t" style="top:537.32px;font-size:8.67px;font-weight:400;color:#3d3d3d;line-height:14px;left:329px;"><span style="letter-spacing:-0.43px">07:25</span></div>
<div class="t" style="top:537.32px;font-size:8.67px;font-weight:400;color:#3d3d3d;line-height:14px;left:395.5px;"><span style="letter-spacing:-0.34px">1 session</span></div>
<div class="t" style="top:537.32px;font-size:8.67px;font-weight:400;color:#777;line-height:14px;left:462px;"><span style="letter-spacing:-0.38px">--</span></div>
<div class="t" style="top:537.32px;font-size:8.67px;font-weight:400;color:#777;line-height:14px;left:530.5px;"><span style="letter-spacing:-0.38px">--</span></div>
<div class="t" style="top:537.32px;font-size:8.67px;font-weight:400;color:#777;line-height:14px;left:597.5px;"><span style="letter-spacing:-0.38px">--</span></div>
<div class="t" style="top:537.32px;font-size:8.67px;font-weight:400;color:#3d3d3d;line-height:14px;left:664px;"><span style="letter-spacing:-0.41px">Acme</span></div>
<div class="t" style="top:537.32px;font-size:8.67px;font-weight:400;color:#3d3d3d;line-height:14px;left:730px;"><span style="letter-spacing:-0.39px">Web</span></div>
<svg style="left:769px;top:538.32px;" width="6" height="12" viewBox="0 0 6 12"><circle cx="3" cy="1.8" r="1.12" fill="#333"/><circle cx="3" cy="6" r="1.12" fill="#333"/><circle cx="3" cy="10.2" r="1.12" fill="#333"/></svg>
<div style="left:62px;top:583px;width:723.8px;height:1px;background:#ededed"></div>
<div style="left:70.8px;top:563.69px;width:43.5px;height:14.8px;background:#fff;border:1px solid #8b89ec;border-radius:2px"></div>
<svg style="left:78px;top:566.7900000000001px;" width="8" height="8" viewBox="0 0 8 8"><path d="M1.9 0.8L6.6 4L1.9 7.2Z" fill="#5957d8" stroke="#5957d8" stroke-width="0.7" stroke-linejoin="round"/></svg>
<div class="t" style="top:563.99px;font-size:8.4px;font-weight:400;color:#5957d8;line-height:14px;-webkit-text-stroke:0.65px;left:91.2px;"><span>Play</span></div>
<svg style="left:128.3px;top:567.19px;" width="8" height="8" viewBox="0 0 8 8"><path d="M0.5 1.2H6.7M0.5 3.5H6.7M0.5 5.8H3.8" stroke="#444" stroke-width="0.85"/><path d="M4.9 5.8H6.9M5.9 4.9V6.9" stroke="#444" stroke-width="0.7"/></svg>
<div class="t" style="top:563.99px;font-size:8.67px;font-weight:400;color:#333;line-height:14px;-webkit-text-stroke:0.48px;left:140.7px;"><span style="letter-spacing:-0.26px">Laura Perkins</span></div>
<div class="t" style="top:563.99px;font-size:8.67px;font-weight:400;color:#3d3d3d;line-height:14px;left:235.9px;"><span style="letter-spacing:-0.42px">May 12 - 03:55 PM</span></div>
<div class="t" style="top:563.99px;font-size:8.67px;font-weight:400;color:#3d3d3d;line-height:14px;left:329px;"><span style="letter-spacing:-0.43px">09:40</span></div>
<div class="t" style="top:563.99px;font-size:8.67px;font-weight:400;color:#3d3d3d;line-height:14px;left:395.5px;"><span style="letter-spacing:-0.34px">2 session</span></div>
<div class="t" style="top:563.99px;font-size:8.67px;font-weight:400;color:#777;line-height:14px;left:462px;"><span style="letter-spacing:-0.38px">--</span></div>
<div class="t" style="top:563.99px;font-size:8.67px;font-weight:400;color:#777;line-height:14px;left:530.5px;"><span style="letter-spacing:-0.38px">--</span></div>
<div class="t" style="top:563.99px;font-size:8.67px;font-weight:400;color:#777;line-height:14px;left:597.5px;"><span style="letter-spacing:-0.38px">--</span></div>
<div class="t" style="top:563.99px;font-size:8.67px;font-weight:400;color:#3d3d3d;line-height:14px;left:664px;"><span style="letter-spacing:-0.41px">Acme</span></div>
<div class="t" style="top:563.99px;font-size:8.67px;font-weight:400;color:#3d3d3d;line-height:14px;left:730px;"><span style="letter-spacing:-0.39px">Web</span></div>
<svg style="left:769px;top:564.9900000000001px;" width="6" height="12" viewBox="0 0 6 12"><circle cx="3" cy="1.8" r="1.12" fill="#333"/><circle cx="3" cy="6" r="1.12" fill="#333"/><circle cx="3" cy="10.2" r="1.12" fill="#333"/></svg>
<div style="left:222.2px;top:370.5px;width:0.8px;height:200px;background:#ececec"></div>
<div style="left:759.3px;top:370.5px;width:0.8px;height:200px;background:#ececec"></div>
<div style="left:0px;top:0px;width:800px;height:1px;background:#a3a3a3"></div>
<div style="left:0px;top:0px;width:1.1px;height:570px;background:#b0b0b0"></div>
<div style="left:798.7px;top:0px;width:1.3px;height:570px;background:#a3a3a3"></div>
<div style="left:0px;top:568.6px;width:800px;height:1.4px;background:#a3a3a3"></div>
</body></html>
